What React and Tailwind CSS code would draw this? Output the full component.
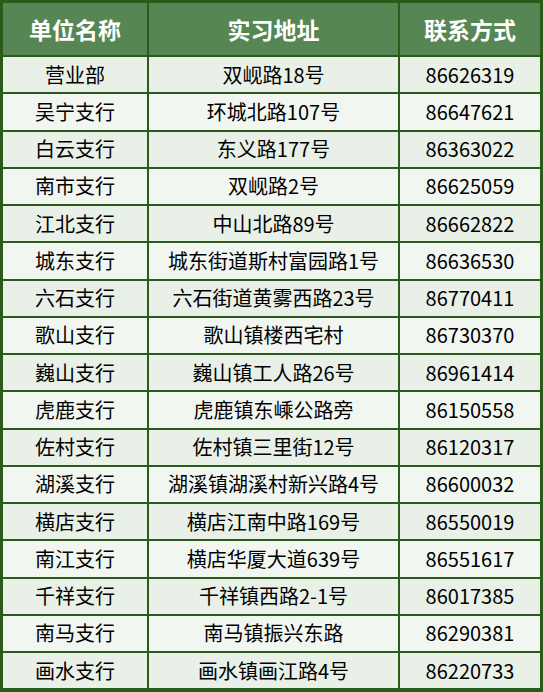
import React from "react";

const rows = [
  ["营业部", "双岘路18号", "86626319"],
  ["吴宁支行", "环城北路107号", "86647621"],
  ["白云支行", "东义路177号", "86363022"],
  ["南市支行", "双岘路2号", "86625059"],
  ["江北支行", "中山北路89号", "86662822"],
  ["城东支行", "城东街道斯村富园路1号", "86636530"],
  ["六石支行", "六石街道黄雾西路23号", "86770411"],
  ["歌山支行", "歌山镇楼西宅村", "86730370"],
  ["巍山支行", "巍山镇工人路26号", "86961414"],
  ["虎鹿支行", "虎鹿镇东嵊公路旁", "86150558"],
  ["佐村支行", "佐村镇三里街12号", "86120317"],
  ["湖溪支行", "湖溪镇湖溪村新兴路4号", "86600032"],
  ["横店支行", "横店江南中路169号", "86550019"],
  ["南江支行", "横店华厦大道639号", "86551617"],
  ["千祥支行", "千祥镇西路2-1号", "86017385"],
  ["南马支行", "南马镇振兴东路", "86290381"],
  ["画水支行", "画水镇画江路4号", "86220733"],
];

export default function App() {
  return (
    <div
      className="w-[543px] h-[692px] bg-white"
      style={{ fontFamily: '"Noto Sans CJK SC", "Noto Sans", sans-serif' }}
    >
      <div className="w-[543px] border-[3px] border-b-[5px] border-[#2b5a1b] flex flex-col">
        <div className="flex h-[52px] bg-[#568653] text-white text-[23px] font-bold">
          <div className="w-[144px] flex items-center justify-center">单位名称</div>
          <div className="w-[251px] border-l-2 border-[#2b5a1b] flex items-center justify-center">实习地址</div>
          <div className="flex-1 border-l-2 border-[#2b5a1b] flex items-center justify-center">联系方式</div>
        </div>
        {rows.map((r, i) => (
          <div
            key={i}
            className={
              "flex h-[37.25px] border-t-2 border-[#2b5a1b] text-[20px] text-black " +
              (i % 2 === 0 ? "bg-[#e9f0e7]" : "bg-[#f2f6f1]")
            }
          >
            <div className="w-[144px] flex items-center justify-center">{r[0]}</div>
            <div className="w-[251px] border-l-2 border-[#2b5a1b] flex items-center justify-center">{r[1]}</div>
            <div className="flex-1 border-l-2 border-[#2b5a1b] flex items-center justify-center">{r[2]}</div>
          </div>
        ))}
      </div>
    </div>
  );
}
